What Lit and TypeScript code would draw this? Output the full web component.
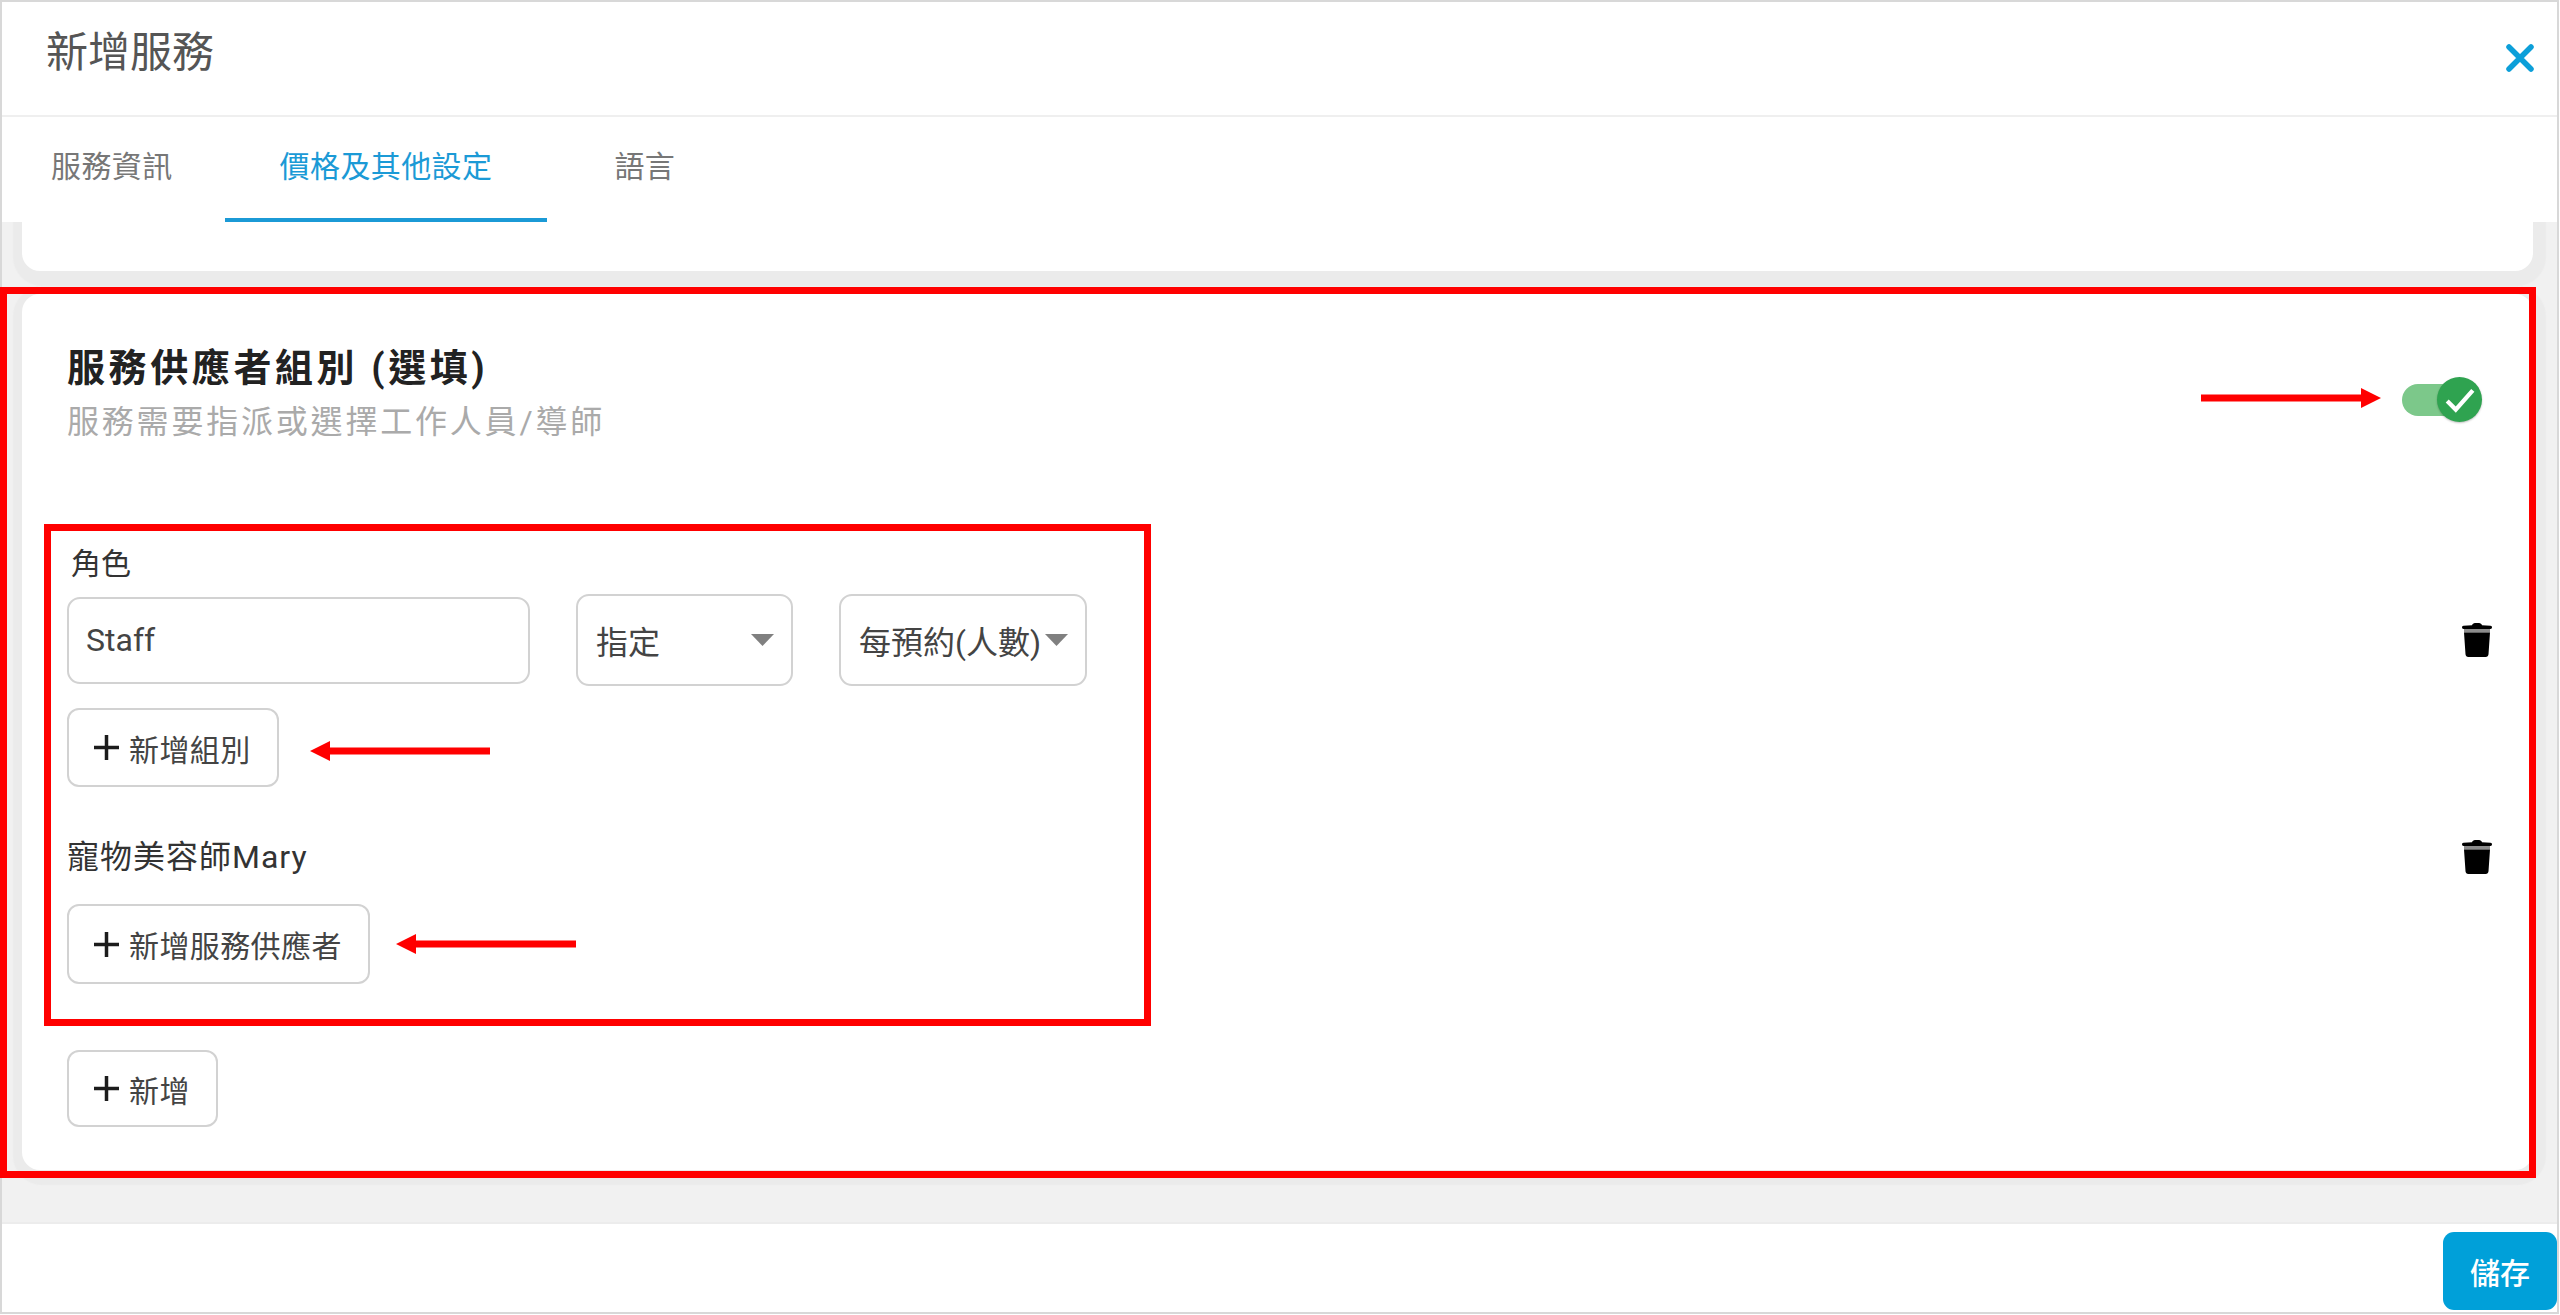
import { LitElement, html, css, svg } from "lit";
import { customElement } from "lit/decorators.js";

const plus = html`<svg class="plus" viewBox="0 0 25 25"><path d="M12.5 0v25M0 12.5h25" /></svg>`;
const trash = html`<svg class="trash" viewBox="0 0 30 34">
  <path fill="#000" d="M10 2.2C10.5 1 11.5 0 13 0h4c1.500 0 2.500 1 3 2.200l8.500.5c1 .1 1.500.8 1.500 1.600S29.500 6 28.500 6h-27C.5 6 0 5.100 0 4.300s.5-1.500 1.500-1.600z" />
  <rect x="2" y="6" width="26" height="3.500" fill="#8c8c8c" />
  <path fill="#000" d="M2 9.500h26l-1.500 21.700c-.1 1.600-1.200 2.800-2.800 2.800H6.300c-1.600 0-2.700-1.200-2.800-2.800z" />
</svg>`;

function arrow(cls: string, left: boolean) {
  return html`<svg class="arrow ${cls}" viewBox="0 0 180 20">
    ${left
      ? svg`<path d="M0 10 20 0v6.500h160v7H20V20z" fill="#ff0000" />`
      : svg`<path d="M180 10 160 0v6.500H0v7h160V20z" fill="#ff0000" />`}
  </svg>`;
}

@customElement("app-root")
export class AppRoot extends LitElement {
  static styles = css`
    :host {
      display: block;
      position: relative;
      width: 2560px;
      height: 1315px;
      overflow: hidden;
      background: #fff;
      font-family: Roboto, "Noto Sans CJK TC", sans-serif;
      color: #333;
    }
    .frame {
      box-sizing: border-box;
      width: 2559px;
      height: 1314px;
      border: 2px solid #d8d8d8;
      display: flex;
      flex-direction: column;
      background: #fff;
    }
    .header {
      box-sizing: content-box;
      height: 113px;
      border-bottom: 2px solid #efefef;
      display: flex;
      justify-content: space-between;
      align-items: flex-start;
    }
    .title {
      margin: 26px 0 0 44px;
      font-size: 42px;
      line-height: 50px;
      color: #555;
      font-weight: 400;
    }
    .close {
      width: 28px;
      height: 28px;
      margin: 42px 23px 0 0;
      fill: none;
      stroke: #0c9fd9;
      stroke-width: 5.500;
      stroke-linecap: round;
    }
    .tabs {
      display: flex;
      height: 105px;
      flex: none;
      background: #fff;
    }
    .tab {
      box-sizing: border-box;
      height: 105px;
      padding: 30px 55px 0;
      font-size: 30px;
      line-height: 40px;
      letter-spacing: 0.4px;
      color: #777;
    }
    .tab.first {
      padding-left: 49px;
      padding-right: 52px;
    }
    .tab.last {
      margin-left: 12px;
    }
    .tab.active {
      color: #1b9ad6;
      border-bottom: 4px solid #1b9ad6;
    }
    .content {
      flex: 1;
      min-height: 0;
      overflow: hidden;
      background: #f1f1f1;
      padding: 0 24px 0 20px;
    }
    .card {
      background: #fff;
      box-shadow: 2px 4px 1px 11px #ebebeb;
    }
    .card.stub {
      height: 49px;
      border-radius: 0 0 18px 18px;
    }
    .card.main {
      margin-top: 23px;
      border-radius: 18px;
      padding: 50px 41px 43px 45px;
    }
    .head {
      display: flex;
      justify-content: space-between;
      align-items: flex-start;
      height: 100px;
    }
    .head h2 {
      margin: 0;
      font-size: 38px;
      line-height: 48px;
      letter-spacing: 3.600px;
      font-weight: 700;
      color: #222;
    }
    .head p {
      margin: 8px 0 0;
      font-size: 32px;
      line-height: 44px;
      letter-spacing: 2.800px;
      color: #aaaaaa;
    }
    .toggle {
      display: flex;
      align-items: center;
      margin: 33px 10px 0 0;
    }
    .track {
      width: 68px;
      height: 32px;
      border-radius: 16px;
      background: #7cc88a;
    }
    .knob {
      width: 45px;
      height: 45px;
      margin-left: -33px;
      border-radius: 50%;
      background: #2fa350;
      box-shadow: 0 1px 2px rgba(0, 0, 0, 0.25);
      display: flex;
      align-items: center;
      justify-content: center;
    }
    .knob svg {
      width: 32px;
      height: 26px;
      fill: none;
      stroke: #fff;
      stroke-width: 4;
    }
    .label {
      margin-top: 100px;
      padding-left: 4px;
      font-size: 30px;
      line-height: 40px;
      color: #333;
    }
    .fields {
      display: flex;
      align-items: center;
      margin-top: 10px;
      height: 92px;
    }
    .field {
      box-sizing: border-box;
      border: 2.500px solid #d2d2d2;
      border-radius: 13px;
      background: #fff;
      display: flex;
      align-items: center;
      font-size: 32px;
      color: #444;
    }
    .input {
      width: 463px;
      height: 87px;
      padding-left: 17px;
      margin-right: 46px;
    }
    .select {
      height: 92px;
      justify-content: space-between;
      padding: 0 17px 0 18px;
      white-space: nowrap;
    }
    .select.short {
      width: 217px;
      margin-right: 46px;
    }
    .select.long {
      width: 248px;
    }
    .caret {
      width: 23px;
      height: 12px;
      flex: none;
      fill: #808080;
    }
    .trash {
      width: 30px;
      height: 34px;
      flex: none;
      margin-left: auto;
    }
    .btn {
      box-sizing: border-box;
      display: flex;
      width: fit-content;
      align-items: center;
      gap: 10px;
      padding: 0 26px 0 25px;
      border: 2.500px solid #d2d2d2;
      border-radius: 12px;
      font-size: 30px;
      letter-spacing: 0.4px;
      color: #444;
      background: #fff;
      white-space: nowrap;
    }
    .plus {
      width: 25px;
      height: 25px;
      fill: none;
      stroke: #1c1c1c;
      stroke-width: 3.500;
    }
    .btn.group {
      height: 79px;
      margin-top: 22px;
    }
    .btn.provider {
      height: 80px;
      margin-top: 27px;
    }
    .btn.add {
      height: 77px;
      margin-top: 66px;
    }
    .person {
      display: flex;
      align-items: center;
      margin-top: 50px;
      height: 40px;
      font-size: 32px;
      line-height: 40px;
      letter-spacing: 1px;
      color: #333;
    }
    .footer {
      height: 90px;
      flex: none;
      box-sizing: border-box;
      border-top: 2px solid #ececec;
      display: flex;
      justify-content: flex-end;
      align-items: flex-start;
      padding-top: 8px;
    }
    .save {
      width: 114px;
      height: 78px;
      border-radius: 11px;
      background: #00a0d9;
      color: #fff;
      font-size: 30px;
      font-weight: 500;
      display: flex;
      align-items: center;
      justify-content: center;
    }
    .box {
      position: absolute;
      box-sizing: border-box;
      border: 7px solid #ff0000;
      pointer-events: none;
    }
    .box.outer {
      left: 0;
      top: 287px;
      width: 2536px;
      height: 891px;
    }
    .box.inner {
      left: 44px;
      top: 524px;
      width: 1107px;
      height: 502px;
    }
    .arrow {
      position: absolute;
      width: 180px;
      height: 20px;
    }
    .arrow.a1 {
      left: 2201px;
      top: 388px;
    }
    .arrow.a2 {
      left: 310px;
      top: 741px;
    }
    .arrow.a3 {
      left: 396px;
      top: 934px;
    }
  `;

  private caret() {
    return html`<svg class="caret" viewBox="0 0 23 12"><path d="M0 0h23L11.500 12z" /></svg>`;
  }

  render() {
    return html`
      <div class="frame">
        <div class="header">
          <div class="title">新增服務</div>
          <svg class="close" viewBox="0 0 28 28"><path d="M3 3l22 22M25 3L3 25" /></svg>
        </div>
        <div class="tabs">
          <div class="tab first">服務資訊</div>
          <div class="tab active">價格及其他設定</div>
          <div class="tab last">語言</div>
        </div>
        <div class="content">
          <div class="card stub"></div>
          <div class="card main">
            <div class="head">
              <div>
                <h2>服務供應者組別 (選填)</h2>
                <p>服務需要指派或選擇工作人員/導師</p>
              </div>
              <div class="toggle">
                <div class="track"></div>
                <div class="knob">
                  <svg viewBox="0 0 30 24"><path d="M3 13l8 8L27 3" /></svg>
                </div>
              </div>
            </div>
            <div class="label">角色</div>
            <div class="fields">
              <div class="field input">Staff</div>
              <div class="field select short"><span>指定</span>${this.caret()}</div>
              <div class="field select long"><span>每預約(人數)</span>${this.caret()}</div>
              ${trash}
            </div>
            <div class="btn group">${plus}<span>新增組別</span></div>
            <div class="person"><span>寵物美容師Mary</span>${trash}</div>
            <div class="btn provider">${plus}<span>新增服務供應者</span></div>
            <div class="btn add">${plus}<span>新增</span></div>
          </div>
        </div>
        <div class="footer"><div class="save">儲存</div></div>
      </div>
      <div class="box outer"></div>
      <div class="box inner"></div>
      ${arrow("a1", false)} ${arrow("a2", true)} ${arrow("a3", true)}
    `;
  }
}
